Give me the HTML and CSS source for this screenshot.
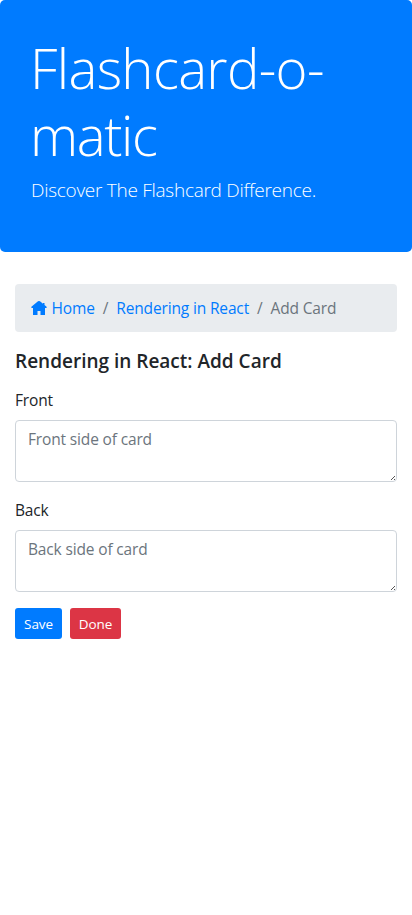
FILE: index.html
```html
<!DOCTYPE html>
<html lang="en">
<head>
<meta charset="utf-8">
<title>Flashcard-o-matic</title>
<link rel="stylesheet" href="styles.css">
</head>
<body>
<header class="jumbotron">
  <h1><span class="title-a">Flashcard-o-</span><span class="title-b">matic</span></h1>
  <p>Discover The Flashcard Difference.</p>
</header>
<main class="container">
  <nav class="breadcrumb">
    <a class="home" href="#"><svg class="icon" viewBox="0 0 16 16" fill="currentColor"><path d="M8 .9 7 1.300.4 6.700V8H2v7h4.500v-4h3v4H14V8h1.600V6.700L13.500 5V3h-1.500v.8L9 1.300z"/></svg><span>Home</span></a>
    <span class="sep">/</span>
    <a href="#">Rendering in React</a>
    <span class="sep">/</span>
    <span class="current">Add Card</span>
  </nav>
  <h2>Rendering in React: Add Card</h2>
  <form>
    <div class="group"><label for="front">Front</label><textarea id="front" rows="2" placeholder="Front side of card"></textarea></div>
    <div class="group"><label for="back">Back</label><textarea id="back" rows="2" placeholder="Back side of card"></textarea></div>
    <div class="actions"><button class="save" type="button">Save</button><button class="done" type="button">Done</button></div>
  </form>
</main>
</body>
</html>
```
FILE: styles.css
```css
* { box-sizing: border-box; }
body { margin: 0; font: 15.5px/24px "Open Sans", sans-serif; letter-spacing: -0.15px; color: #212529; background: #fff; }
.jumbotron { height: 252px; padding: 32px 31px; margin-bottom: 32px; border-radius: 5px; background: #007bff; color: #fff; }
h1 { margin: 3px 0 6px; font-size: 54.5px; line-height: 67px; font-weight: 300; }
.title-a, .title-b { display: block; margin-left: -1px; }
.title-a { letter-spacing: -0.65px; }
.title-b { letter-spacing: -1.4px; }
.jumbotron p { margin: 0; font-size: 19px; line-height: 30px; font-weight: 320; letter-spacing: -0.27px; }
.container { padding: 0 15px; }
.breadcrumb { display: flex; height: 48px; padding: 12px 16px; margin-bottom: 16px; background: #e9ecef; border-radius: 4px; white-space: nowrap; }
a { color: #007bff; text-decoration: none; }
.home { display: flex; gap: 4.5px; }
.icon { width: 16px; height: 16px; margin-top: 4px; }
.sep { margin: 0 8px; color: #6c757d; }
.current { color: #6c757d; }
h2 { margin: 0 0 14px; font-size: 19px; line-height: 26px; font-weight: 580; white-space: nowrap; }
h2 { letter-spacing: 0; }
.group { margin-bottom: 16px; }
label { display: block; margin-bottom: 8px; }
textarea { display: block; width: 100%; height: 62px; padding: 6px 12px; border: 1px solid #ced4da; border-radius: 4px; font: inherit; letter-spacing: inherit; resize: vertical; overflow: auto; }
textarea::placeholder { color: #6c757d; opacity: 1; }
textarea::-webkit-resizer { background: linear-gradient(135deg, transparent 50%, #555 50%, #555 60%, transparent 60%, transparent 76%, #555 76%, #555 90%, transparent 90%) right 1px bottom 1px / 4px 4px no-repeat; }
.actions { display: flex; gap: 8px; }
button { height: 31px; padding: 1px 0 0; border: 0; border-radius: 3px; color: #fff; font: 13.5px/21px "Open Sans", sans-serif; letter-spacing: -0.1px; }
.save { width: 47px; background: #007bff; }
.done { width: 51px; background: #dc3545; }
```
